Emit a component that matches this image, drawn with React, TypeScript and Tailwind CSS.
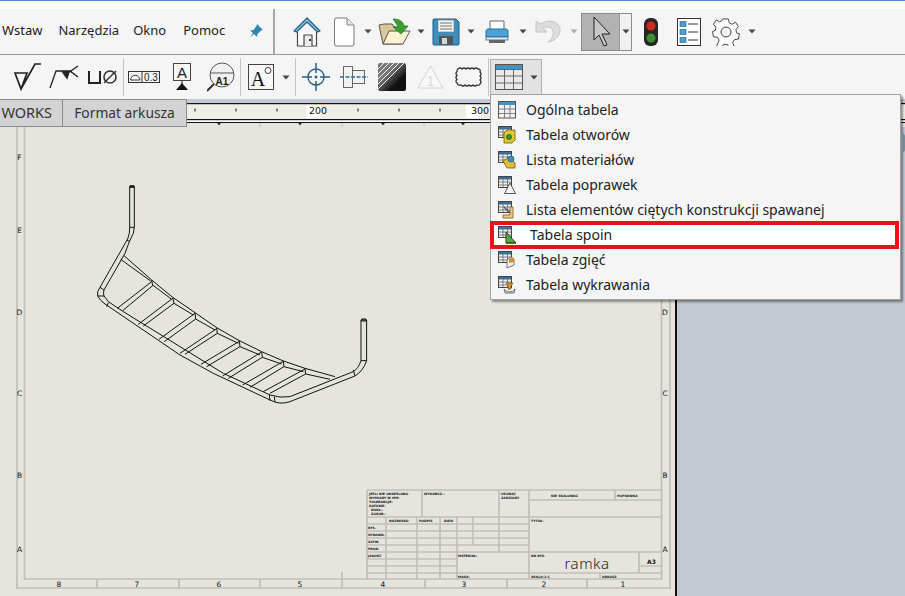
import type { ReactNode } from 'react';

const Arrow = ({ className = '', color = '#444' }: { className?: string; color?: string }) => (
  <svg width="8" height="5" viewBox="0 0 8 5" className={className}>
    <path d="M0.5 0.5h7L4 4.5z" fill={color} />
  </svg>
);

const Sep = ({ className = '' }: { className?: string }) => (
  <div className={`w-px h-[38px] bg-[#c4c4c4] ${className}`} />
);

const HomeIcon = () => (
  <svg width="28" height="30" viewBox="0 0 28 30" className="ml-[18px]">
    <path d="M1 14L14 1l13 13-2.500 1L14 5 3.500 15z" fill="#8fc3e0" stroke="#1f5f85" strokeWidth="1.200" strokeLinejoin="round" />
    <path d="M4.500 15v14h19V15" fill="#fff" stroke="#444" strokeWidth="1.200" />
    <path d="M11 29V18h8v11" fill="#eee" stroke="#444" strokeWidth="1.200" />
    <rect x="16" y="22" width="2" height="2" fill="#333" />
  </svg>
);

const DocIcon = () => (
  <svg width="22" height="30" viewBox="0 0 22 30" className="ml-[12px]">
    <path d="M1.500 3a2 2 0 012-2H14l7 7v19a2 2 0 01-2 2H3.500a2 2 0 01-2-2z" fill="#fff" stroke="#777" />
    <path d="M14 1v7h7" fill="#e4e4e4" stroke="#888" />
  </svg>
);

const FolderIcon = () => (
  <svg width="33" height="30" viewBox="0 0 33 30" className="ml-[6px]">
    <path d="M1 8l5-1h8l2 3h8v17H5z" fill="#d9c89a" stroke="#555" />
    <path d="M5 27l6-13h21l-7 13z" fill="#fbf2cf" stroke="#555" />
    <path d="M15 2c6 0 10 2 11 7h4l-7 8-8-7h5c-1-3-3-5-5-8z" fill="#3aa02e" stroke="#1f6f1a" strokeWidth=".7" />
  </svg>
);

const SaveIcon = () => (
  <svg width="28" height="28" viewBox="0 0 28 28" className="ml-[7px]">
    <path d="M2 1h22l3 3v22a1 1 0 01-1 1H2a1 1 0 01-1-1V2a1 1 0 011-1z" fill="#3d8fc0" stroke="#1d5f88" />
    <rect x="6" y="2" width="16" height="12" fill="#f3f3f3" stroke="#777" strokeWidth=".6" />
    <path d="M8 5h12M8 8h12M8 11h12" stroke="#777" />
    <rect x="7" y="18" width="14" height="9" fill="#555" />
    <rect x="10" y="20" width="5" height="6" fill="#cfd8dc" />
  </svg>
);

const PrinterIcon = () => (
  <svg width="24" height="24" viewBox="0 0 24 24" className="ml-[10px]">
    <path d="M5 1h14v9H5z" fill="#fff" stroke="#666" />
    <path d="M1 11c0-1 1-2 2-2h18c1 0 2 1 2 2v6H1z" fill="#49a3d6" stroke="#2b6e96" />
    <rect x="1" y="17" width="22" height="3" fill="#dce6ec" stroke="#2b6e96" strokeWidth=".8" />
    <rect x="4" y="20" width="16" height="3" fill="#666" />
  </svg>
);

const UndoIcon = () => (
  <svg width="26" height="27" viewBox="0 0 26 27" className="ml-[8px]">
    <path d="M1 3v11h11L8 10c4-2 9-1 10 3 1 4-1 8-5 11 7-1 12-6 12-12C25 4 14 0 6 6z" fill="#dcdcdc" stroke="#c4c4c4" />
  </svg>
);

const PointerButton = () => (
  <div className="ml-[3px] flex h-[38px] w-[51px] border border-[#8c8c8c]">
    <div className="flex w-[37px] items-center justify-center bg-[#b2b2b2]">
      <svg width="20" height="32" viewBox="0 0 20 32">
        <path d="M3 1v23l5-5 5 11 3-1-5-11h8z" fill="#c8c8c8" stroke="#222" strokeWidth="1" strokeLinejoin="round" />
      </svg>
    </div>
    <div className="flex flex-1 items-center justify-center border-l border-[#9a9a9a] bg-[#f0f0f0]">
      <Arrow />
    </div>
  </div>
);

const TrafficIcon = () => (
  <svg width="14" height="28" viewBox="0 0 14 28" className="ml-[12px]">
    <rect x="0" y="0" width="14" height="28" rx="6" fill="#262626" />
    <circle cx="7" cy="8" r="4.500" fill="#d02a1c" />
    <circle cx="7" cy="20" r="4.500" fill="#3f8f2f" />
  </svg>
);

const ListIcon = () => (
  <svg width="24" height="28" viewBox="0 0 24 28" className="ml-[19px]">
    <rect x=".5" y=".5" width="23" height="27" fill="#fff" stroke="#333" />
    <rect x="3" y="3.500" width="6" height="5" fill="#4d9ccb" stroke="#1f5f85" strokeWidth=".6" />
    <rect x="3" y="11.500" width="6" height="5" fill="#4d9ccb" stroke="#1f5f85" strokeWidth=".6" />
    <rect x="3" y="19.500" width="6" height="5" fill="#4d9ccb" stroke="#1f5f85" strokeWidth=".6" />
    <path d="M11 6h10M11 14h10M11 22h10" stroke="#333" />
  </svg>
);

const GearIcon = () => (
  <svg width="28" height="28" viewBox="0 0 28 28" className="ml-[11px]">
    <path
      d="M11 1h6l1 4 3 1.500 3.500-2 3 4.500-2.500 3 .500 3.500 3 1-1 5.500-4 .500-2 3 1.500 3.500-5 2-2-3.500h-4l-2 3.500-5-2L7.500 23l-2-3-4-.500L.500 14l3-1L4 9.500 1.500 6.500l3-4.500L8 4l2-1z"
      fill="#fdfdfd"
      stroke="#444"
      strokeWidth="1"
      strokeLinejoin="round"
      transform="scale(.96)"
    />
    <circle cx="14" cy="14" r="5" fill="#f5f5f5" stroke="#444" />
  </svg>
);

const SqrtIcon = () => (
  <svg width="28" height="28" viewBox="0 0 28 28" className="ml-[14px]">
    <path d="M1 10h12L7 26 1 10zM7 26L21 1h6" fill="none" stroke="#222" strokeWidth="1.700" />
  </svg>
);

const WeldIcon = () => (
  <svg width="30" height="24" viewBox="0 0 30 24" className="ml-[7px]">
    <path d="M1 23L7 6h16" fill="none" stroke="#222" strokeWidth="1.300" />
    <path d="M13 6l5 7 2-7M19 8l10-7M21 6l8 6" fill="none" stroke="#222" strokeWidth="1.500" />
    <path d="M14 6l4 7 3-7z" fill="#222" />
  </svg>
);

const UDiaIcon = () => (
  <svg width="30" height="16" viewBox="0 0 30 16" className="ml-[9px]">
    <path d="M1 2v12h11V2" fill="none" stroke="#222" strokeWidth="2" />
    <circle cx="22" cy="8" r="6" fill="none" stroke="#333" strokeWidth="1.600" />
    <path d="M16 14L28 2" stroke="#333" strokeWidth="1.400" />
  </svg>
);

const DatumBoxIcon = () => (
  <svg width="32" height="12" viewBox="0 0 32 12" className="ml-[4px]">
    <rect x=".5" y=".5" width="31" height="11" fill="#f7f7f7" stroke="#333" />
    <path d="M14 .5v11" stroke="#333" />
    <path d="M2.500 9a4.700 4.700 0 019.400 0z" fill="none" stroke="#333" />
    <text x="16" y="10" fontSize="10" fontFamily="Liberation Sans, sans-serif" fill="#222">0.3</text>
  </svg>
);

const DatumAIcon = () => (
  <svg width="18" height="28" viewBox="0 0 18 28" className="ml-[13px]">
    <rect x=".5" y=".5" width="17" height="17" fill="#f7f7f7" stroke="#444" />
    <text x="9" y="15" textAnchor="middle" fontSize="15" fontFamily="Liberation Sans, sans-serif" fill="#222">A</text>
    <path d="M9 18v3" stroke="#111" />
    <path d="M3 27l6-7 6 7z" fill="#111" />
  </svg>
);

const MagnifyIcon = () => (
  <svg width="28" height="30" viewBox="0 0 28 30" className="ml-[16px]">
    <circle cx="15" cy="13" r="12" fill="#f2f2f2" stroke="#555" />
    <path d="M3 11h24" stroke="#555" />
    <path d="M7 22L0 29" stroke="#333" strokeWidth="2" />
    <text x="15" y="23" textAnchor="middle" fontSize="10" fontWeight="700" fontFamily="Liberation Sans, sans-serif" fill="#222">A1</text>
  </svg>
);

const NoteIcon = () => (
  <svg width="26" height="26" viewBox="0 0 26 26" className="ml-[7px]">
    <rect x=".5" y=".5" width="25" height="25" fill="#f7f7f7" stroke="#444" />
    <text x="10" y="22" textAnchor="middle" fontSize="20" fontFamily="Liberation Serif, serif" fill="#111">A</text>
    <circle cx="20" cy="6.500" r="3" fill="none" stroke="#444" />
  </svg>
);

const CrossIcon = () => (
  <svg width="28" height="28" viewBox="0 0 28 28" className="ml-[6px]">
    <circle cx="14" cy="14" r="8" fill="none" stroke="#2f5f80" strokeWidth="1.400" />
    <path d="M14 0v10M14 18v10M0 14h10M18 14h10" stroke="#2f5f80" strokeWidth="1.500" />
    <circle cx="14" cy="14" r="1.500" fill="#2f5f80" />
  </svg>
);

const CenterIcon = () => (
  <svg width="28" height="22" viewBox="0 0 28 22" className="ml-[10px]">
    <rect x="3.500" y=".5" width="9" height="21" fill="#f2f2f2" stroke="#666" />
    <rect x="12.500" y="4.500" width="12" height="13" fill="#f2f2f2" stroke="#666" />
    <path d="M0 11h28" stroke="#2f6f95" strokeWidth="1.500" strokeDasharray="4 1.500" />
  </svg>
);

const HatchIcon = () => (
  <svg width="28" height="28" viewBox="0 0 28 28" className="ml-[10px]">
    <defs>
      <linearGradient id="hatchFade" x1="0" y1="0" x2="1" y2="1">
        <stop offset="0.35" stopColor="#777" />
        <stop offset="0.7" stopColor="#111" />
      </linearGradient>
    </defs>
    <rect width="28" height="28" rx="2" fill="url(#hatchFade)" />
    <path d="M-2 8L8-2M-2 13L13-2M-2 18L18-2M-2 23L23-2M-1 27L27-1" stroke="#f4f4f4" strokeWidth="1" />
  </svg>
);

const FlagIcon = () => (
  <svg width="27" height="24" viewBox="0 0 27 24" className="ml-[11px]">
    <path d="M13.500 1L26 23H1z" fill="#f8f8f8" stroke="#d4d4d4" />
    <text x="13.500" y="21" textAnchor="middle" fontSize="15" fontFamily="Liberation Sans, sans-serif" fill="#d8d8d8">1</text>
  </svg>
);

const CloudIcon = () => (
  <svg width="27" height="20" viewBox="0 0 27 20" className="ml-[11px]">
    <path
      d="M3 2q2-2 4 0q2-2 4 0q2-2 4 0q2-2 4 0q2-2 4 0q3 0 2 3q2 2 0 4q2 2 0 4q2 2 0 4q-1 2-3 1q-2 2-4 0q-2 2-4 0q-2 2-4 0q-2 2-4 0q-3 1-4-2q-2-2 0-3.500q-2-2 0-4q-2-2 0-4q0-2 1-2.500z"
      fill="none"
      stroke="#333"
      strokeWidth="1.300"
    />
  </svg>
);

const BigTable = () => (
  <svg width="28" height="26" viewBox="0 0 28 26">
    <rect x=".5" y=".5" width="27" height="25" fill="#e9e9e9" stroke="#555" />
    <rect x="1" y="1" width="26" height="4" fill="#3f93c8" />
    <path d="M1 5.500h26M1 12h26M1 19h26M9.500 5v20M18.500 5v20" stroke="#666" />
  </svg>
);

// small table glyph shared by the menu icons, with a coloured part on top
const MenuIcon = ({ children }: { children?: ReactNode }) => (
  <svg width="18" height="18" viewBox="0 0 18 18" className="shrink-0">
    <rect x=".5" y=".5" width="13" height="11" fill="#f0f0f0" stroke="#444" />
    <rect x="1" y="1" width="12" height="2.500" fill="#3f6f98" />
    <path d="M1 6h12M1 9h12M5 3v8M9.500 3v8" stroke="#666" strokeWidth=".8" />
    {children}
  </svg>
);

const menuItems: { label: string; art: ReactNode; active?: boolean }[] = [
  {
    label: 'Ogólna tabela',
    art: (
      <>
        <rect x=".5" y=".5" width="17" height="16.500" fill="#f0f0f0" stroke="#555" />
        <rect x="1" y="1" width="16" height="3" fill="#3f93c8" />
        <path d="M1 8h16M1 12.500h16M6.500 4v13M12 4v13" stroke="#777" strokeWidth=".9" />
      </>
    ),
  },
  {
    label: 'Tabela otworów',
    art: (
      <>
        <path d="M6 7l3-3h8v10l-3 3H6z" fill="#e3c52c" stroke="#6e5c10" strokeWidth=".8" />
        <circle cx="11" cy="11" r="2.500" fill="#2f9a3a" stroke="#1a5c22" strokeWidth=".8" />
      </>
    ),
  },
  {
    label: 'Lista materiałów',
    art: (
      <>
        <path d="M5 10l5-3 7 5v5H9z" fill="#e0bb3a" stroke="#6e5c10" strokeWidth=".8" />
        <circle cx="13" cy="8" r="3" fill="#3f93c8" stroke="#1f5f85" strokeWidth=".8" />
      </>
    ),
  },
  {
    label: 'Tabela poprawek',
    art: <path d="M12 7l5.500 10.500H6.500z" fill="#f5f5f5" stroke="#444" strokeWidth=".9" />,
  },
  {
    label: 'Lista elementów ciętych konstrukcji spawanej',
    art: (
      <>
        <path d="M15 6v11H5v-3h7V6z" fill="#eccb82" stroke="#7a5c20" strokeWidth=".8" />
        <path d="M6 6l6 6" stroke="#555" strokeWidth="1.500" />
      </>
    ),
  },
  {
    label: 'Tabela spoin',
    active: true,
    art: <path d="M8 6v11h10zM8 17h10" fill="#46b04a" stroke="#3d3d00" strokeWidth="1" />,
  },
  {
    label: 'Tabela zgięć',
    art: (
      <>
        <path d="M9 9c3-3 6-3 7-1v6l-7 3z" fill="#f2f2f2" stroke="#555" strokeWidth=".8" />
        <path d="M11 8l5-1v4l-5 1z" fill="#e08a2c" />
      </>
    ),
  },
  {
    label: 'Tabela wykrawania',
    art: (
      <>
        <path d="M6 13c3 4 8 4 11 0l-1 4H7z" fill="#e2e2e2" stroke="#555" strokeWidth=".8" />
        <path d="M8 7h7l-2 3v3h-3v-3z" fill="#e0912c" stroke="#7a4a10" strokeWidth=".7" />
      </>
    ),
  },
];

const TableMenu = () => (
  <div className="absolute left-[490px] top-[94px] flex h-[206px] w-[411px] flex-col border border-[#a2a2a2] bg-[#f5f5f5] pt-[2px] shadow-[2px_2px_2px_rgba(0,0,0,0.4)]">
    {menuItems.map((item) =>
      item.active ? (
        <div
          key={item.label}
          className="-ml-px flex h-[28px] w-[409px] -my-[1.500px] items-center border-[4px] border-[#ee1019] bg-white pl-[4px]"
        >
          <MenuIcon>{item.art}</MenuIcon>
          <span className="ml-[14px]">{item.label}</span>
        </div>
      ) : (
        <div key={item.label} className="flex h-[25px] items-center pl-[7px]">
          {item.label === 'Ogólna tabela' ? (
            <svg width="18" height="18" viewBox="0 0 18 18" className="shrink-0">
              {item.art}
            </svg>
          ) : (
            <MenuIcon>{item.art}</MenuIcon>
          )}
          <span className="ml-[10px]">{item.label}</span>
        </div>
      )
    )}
  </div>
);

const Ruler = () => (
  <svg width="718" height="28" viewBox="0 0 718 28" className="block">
    <rect y="0" width="718" height="4" fill="#c5c8d2" />
    <rect y="4" width="718" height="17" fill="#eeeee6" />
    <rect y="4" width="718" height="1.200" fill="#111" />
    <rect y="20" width="718" height="1.200" fill="#111" />
    <rect y="23" width="718" height="1" fill="#111" />
    <rect y="24" width="718" height="4" fill="#e5e5dd" />
    {[8, 49, 90, 131, 171, 212, 253, 293].map((x) => (
      <path key={x} d={`M${x} 9.500v3`} stroke="#111" />
    ))}
    <rect x="119" y="6" width="15" height="13" fill="#fff" />
    <text x="131" y="15" textAnchor="middle" fontSize="9.500" fontFamily="DejaVu Sans, sans-serif" fill="#111">
      200
    </text>
    <rect x="279" y="6" width="15" height="13" fill="#fff" />
    <text x="293" y="15" textAnchor="middle" fontSize="9.500" fontFamily="DejaVu Sans, sans-serif" fill="#111">
      300
    </text>
    {[32, 113, 196, 276].map((x) => (
      <path key={x} d={`M${x - 2} 24h4l-2 2.500z`} fill="#333" />
    ))}
    {[73, 155, 237].map((x) => (
      <path key={x} d={`M${x} 24v4`} stroke="#c0bfba" />
    ))}
  </svg>
);

const GREY = '#c0bfb9';

// tiny label on the title block
const Tiny = ({ x, y, children }: { x: number; y: number; children: string }) => (
  <text x={x} y={y} fontSize="3.200" fontWeight="700" fontFamily="DejaVu Sans, sans-serif" fill="#111">
    {children}
  </text>
);

const rungs = [
  'M215 335L112 415M218 347L128 422',
  'M278 385L175 463M282 400L190 468',
  'M345 430L237 508M347 447L253 515',
  'M410 476L300 550M412 490L315 553',
  'M478 514L363 583M480 530L380 590',
  'M545 546L428 618M547 562L445 625',
  'M610 574L488 645M612 590L510 652',
  'M675 597L550 665M677 612L570 670',
];

const Frame = () => (
  <g transform="translate(80 43) scale(.3333)" fill="none" stroke="#111" strokeWidth="3" strokeLinejoin="round">
    <path d="M149 172V50h14v122M149 172h14M150 47h12v5h-12z" />
    <path d="M149 172l-1 18-5 17L60 352q-10 13-7 26 7 14 22 24L300 555 400 610 570 690q30 16 60 5L825 618q24-14 35-46V450" />
    <path d="M163 172l-3 18-12 25-13 35L72 360q-3 10 0 18l13 17 45 30L300 530l130 80 140 65q30 10 60 5L820 605q16-10 23-33V450" />
    <path d="M843 450h17M845 447h13v6h-13z" />
    <path d="M132 257L215 330 278 382 345 428 410 473 478 512 545 545 610 573 675 595 765 620" />
    <path d="M122 268L212 333M218 345L275 388M282 400L340 435M347 447L405 480M412 490L475 520M480 530L540 555M547 562L605 582M612 590L670 605M677 612L750 628" />
    {rungs.map((d) => (
      <path key={d} d={d} />
    ))}
    <path d="M215 330l3 17M278 382l4 18M345 428l2 19M410 473l2 17M478 512l2 18M545 545l2 17M610 573l2 17M675 595l2 17" />
    <path d="M60 352l12 8M53 378h19M85 398l-5 12M568 675l2 17M583 680l2 15M820 600l5 18M843 572h17M140 210l10 5" />
  </g>
);

const sheetLines = [
  // sheet borders
  'M17 0V461H670V0M24.500 0V452H661.500V0',
  // zone ticks along the bottom
  'M97 452v9M179 452v9M260 452v9M342 445v16M425 452v9M507 452v9M587 452v9',
  // title block
  'M367 363H661M367 390H661M529 373H661M422 363v27M499 363v27M529 363v89M615 363v10',
  'M367 363V452M367 397H529M367 404H529M367 411H529M367 418H529M367 425H661M367 432H457M367 439H457M367 446H661',
  'M386 390v62M417 390v62M440 390v62M457 390v62M473 390v28M499 390v35M639 425v21M639 439H661M600 446v6',
];

const zoneRows: [string, number][] = [
  ['F', 33],
  ['E', 106],
  ['D', 188],
  ['C', 269],
  ['B', 351],
  ['A', 425],
];

const zoneCols: [string, number][] = [
  ['8', 59],
  ['7', 137],
  ['6', 219],
  ['5', 300],
  ['4', 383],
  ['3', 464],
  ['2', 544],
  ['1', 623],
];

const Sheet = () => (
  <svg width="675" height="469" viewBox="0 0 675 469" className="block">
    <rect width="675" height="469" fill="#e5e5dd" />
    {sheetLines.map((d) => (
      <path key={d} d={d} fill="none" stroke={GREY} strokeWidth="1.700" />
    ))}
    <Frame />
    <g fontSize="7.500" fontFamily="DejaVu Sans, sans-serif" fill="#111" textAnchor="middle">
      {zoneRows.map(([l, y]) => (
        <text key={l} x="19.500" y={y}>
          {l}
        </text>
      ))}
      {zoneRows.map(([l, y]) => (
        <text key={l} x="665" y={y}>
          {l}
        </text>
      ))}
      {zoneCols.map(([l, x]) => (
        <text key={l} x={x} y="460">
          {l}
        </text>
      ))}
    </g>
    <Tiny x={369} y={367.500}>JEŚLI NIE OKREŚLONO</Tiny>
    <Tiny x={369} y={371.500}>WYMIARY W MM:</Tiny>
    <Tiny x={369} y={375.500}>TOLERANCJE:</Tiny>
    <Tiny x={369} y={379.500}>KĄTOWE:</Tiny>
    <Tiny x={371} y={383.500}>DOKŁ.:</Tiny>
    <Tiny x={371} y={387.500}>ZGRUB.:</Tiny>
    <Tiny x={424} y={368}>WYKOŃCZ.:</Tiny>
    <Tiny x={501} y={368}>USUNĄĆ</Tiny>
    <Tiny x={501} y={372}>ZADZIORY</Tiny>
    <Tiny x={551} y={370}>NIE SKALOWAĆ</Tiny>
    <Tiny x={617} y={370}>POPRAWKA</Tiny>
    <Tiny x={389} y={395}>NAZWISKO</Tiny>
    <Tiny x={419} y={395}>PODPIS</Tiny>
    <Tiny x={444} y={395}>DATA</Tiny>
    <Tiny x={531} y={395}>TYTUŁ:</Tiny>
    <Tiny x={368} y={402}>RYS.</Tiny>
    <Tiny x={368} y={409}>SPRAWD.</Tiny>
    <Tiny x={368} y={416}>ZATW.</Tiny>
    <Tiny x={368} y={423}>PROD.</Tiny>
    <Tiny x={368} y={430}>JAKOŚĆ</Tiny>
    <Tiny x={458} y={430}>MATERIAŁ:</Tiny>
    <Tiny x={531} y={430}>NR RYS.</Tiny>
    <Tiny x={458} y={450.500}>MASA:</Tiny>
    <Tiny x={531} y={450.500}>SKALA:1:5</Tiny>
    <Tiny x={602} y={450.500}>ARKUSZ</Tiny>
    <text x="647" y="437" fontSize="6" fontWeight="700" fontFamily="DejaVu Sans, sans-serif" fill="#111">
      A3
    </text>
    <text x="587" y="442" textAnchor="middle" fontSize="15" fontWeight="300" letterSpacing=".5" fontFamily="Noto Sans, sans-serif" fill="#222">
      ramka
    </text>
  </svg>
);

export default function App() {
  return (
    <div
      className="relative h-[596px] w-[905px] overflow-hidden bg-white text-[14px] text-[#222]"
      style={{ fontFamily: '"Noto Sans", sans-serif' }}
    >
      <div className="h-px bg-[#4a8fd0]" />
      <div className="h-[8px] bg-white" />

      {/* top menu row */}
      <div className="flex h-[46px] items-center border-b border-[#9a9a9a] bg-[#f5f5f5]">
        <div className="flex h-full w-[273px] shrink-0 items-center pb-[1px] text-[13px]">
          <span className="ml-[2px]">Wstaw</span>
          <span className="ml-[16px]">Narzędzia</span>
          <span className="ml-[14px]">Okno</span>
          <span className="ml-[17px]">Pomoc</span>
          <svg width="14" height="14" viewBox="0 0 14 14" className="ml-[24px]">
            <path d="M8 0l6 6-2 .5L8.500 10 8 13 5 10 1 13.500 4 9 1 6.500 4.500 6 7.500 2z" fill="#2f86b0" />
          </svg>
        </div>
        <div className="h-full w-[2px] bg-[#a8a8a8]" />
        <HomeIcon />
        <DocIcon />
        <Arrow className="ml-[9px]" />
        <FolderIcon />
        <Arrow className="ml-[6px]" />
        <SaveIcon />
        <Arrow className="ml-[7px]" />
        <PrinterIcon />
        <Arrow className="ml-[10px]" />
        <UndoIcon />
        <Arrow className="ml-[9px]" color="#aaa" />
        <PointerButton />
        <TrafficIcon />
        <ListIcon />
        <GearIcon />
        <Arrow className="ml-[8px]" />
      </div>

      {/* annotation toolbar */}
      <div className="flex h-[44px] items-center bg-[#f5f5f5]">
        <SqrtIcon />
        <WeldIcon />
        <UDiaIcon />
        <Sep className="ml-[5px]" />
        <DatumBoxIcon />
        <DatumAIcon />
        <MagnifyIcon />
        <Sep className="ml-[5px]" />
        <NoteIcon />
        <Arrow className="ml-[8px]" />
        <Sep className="ml-[5px]" />
        <CrossIcon />
        <CenterIcon />
        <HatchIcon />
        <FlagIcon />
        <CloudIcon />
        <Sep className="ml-[6px]" />
        <div className="ml-[1px] flex h-[37px] w-[52px] items-center border border-[#b0b0b0] bg-[#e2e2e2] pl-[4px]">
          <BigTable />
          <Arrow className="ml-[7px]" />
        </div>
      </div>

      {/* tabs and ruler */}
      <div className="flex h-[28px]">
        <div className="flex h-full w-[187px] shrink-0 border-y border-r border-[#8a8a8a] bg-[#d3d3d3] text-[#333]">
          <div className="flex w-[63px] items-center justify-end overflow-hidden whitespace-nowrap border-r border-[#8a8a8a] pr-[10px] text-[14.500px]">
            WORKS
          </div>
          <div className="flex flex-1 items-center justify-center text-[13.800px]">Format arkusza</div>
        </div>
        <Ruler />
      </div>

      {/* drawing sheet and right panel */}
      <div className="flex h-[469px]">
        <Sheet />
        <div className="w-[2px] bg-[#111]" />
        <div className="flex-1 bg-[#c3c7d2]" />
      </div>

      <TableMenu />
      <div className="absolute left-[901px] top-[133px] h-[20px] w-[4px] rounded-r-full bg-[#7b8a98]" />
    </div>
  );
}
